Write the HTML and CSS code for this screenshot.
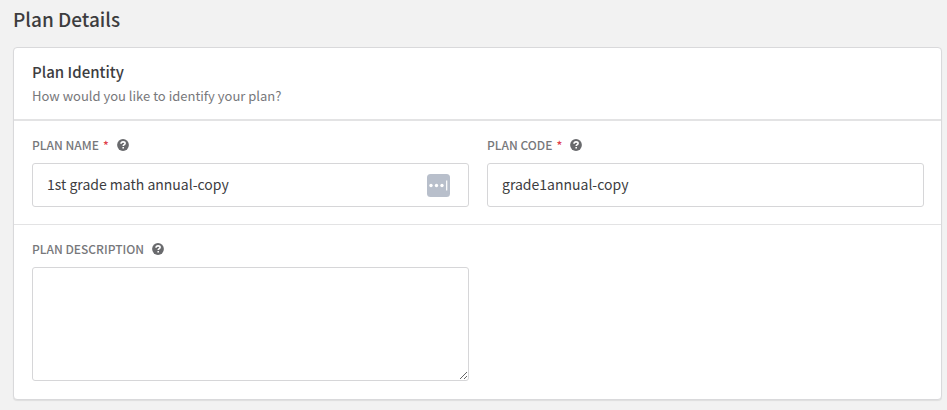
FILE: index.html
```
<!DOCTYPE html>
<html lang="en">
<head>
  <meta charset="UTF-8">
  <meta name="viewport" content="width=device-width, initial-scale=1.0">
  <title>Plan Details</title>
  <link rel="stylesheet" href="styles.css">
</head>
<body>

  <svg class="sprite" aria-hidden="true">
    <symbol id="help" viewBox="0 0 12 12">
      <circle cx="6" cy="6" r="5.9" fill="#696a6d"/>
      <path d="M4 4.7C4.1 3.4 5 2.9 6.1 2.9c1.2 0 2 .7 2 1.6C8.1 5.700 6.2 5.700 6.2 7.100" fill="none" stroke="#fff" stroke-width="1.6"/>
      <rect x="5.400" y="8" width="1.600" height="1.500" fill="#fff"/>
    </symbol>
  </svg>

  <main class="page">
    <h1 class="page-title">Plan Details</h1>

    <form class="card">
      <div class="card-header">
        <h2>Plan Identity</h2>
        <p>How would you like to identify your plan?</p>
      </div>

      <div class="card-row">
        <div class="field">
          <div class="field-label">
            <label for="plan-name">PLAN NAME<span class="required">*</span></label>
            <svg class="help"><use href="#help"/></svg>
          </div>
          <div class="input-wrap">
            <input type="text" id="plan-name" value="1st grade math annual-copy">
            <button type="button" class="autofill" aria-label="Autofill">
              <svg viewBox="0 0 24 24">
                <rect x="1" y="1" width="23" height="23" rx="3.5" fill="#b8bfcb"/>
                <circle cx="5" cy="12.5" r="1.7" fill="#fff"/>
                <circle cx="10.5" cy="12.5" r="1.7" fill="#fff"/>
                <circle cx="16" cy="12.5" r="1.7" fill="#fff"/>
                <path d="M20.700 7.500v10" stroke="#fff" stroke-width="1.2"/>
              </svg>
            </button>
          </div>
        </div>

        <div class="field">
          <div class="field-label">
            <label for="plan-code">PLAN CODE<span class="required">*</span></label>
            <svg class="help"><use href="#help"/></svg>
          </div>
          <div class="input-wrap">
            <input type="text" id="plan-code" value="grade1annual-copy">
          </div>
        </div>
      </div>

      <div class="card-row">
        <div class="field">
          <div class="field-label">
            <label for="plan-description">PLAN DESCRIPTION</label>
            <svg class="help"><use href="#help"/></svg>
          </div>
          <textarea id="plan-description"></textarea>
        </div>
      </div>
    </form>
  </main>

</body>
</html>
```
FILE: styles.css
```
* {
  box-sizing: border-box;
}

body {
  margin: 0;
  background-color: #f2f2f2;
  color: #3d3d3f;
  font-family: "Noto Sans CJK SC", "Open Sans", sans-serif;
}

h1, h2, p {
  margin: 0;
}

.sprite {
  display: none;
}

.page {
  padding: 6px 5px 10px 13px;
}

.page-title {
  margin-bottom: 15px;
  font-size: 19px;
  font-weight: 500;
  line-height: 26px;
}

.card {
  background-color: #fff;
  border: 1px solid #d9d9db;
  border-radius: 4px;
  box-shadow: 0 1px 1px rgba(0, 0, 0, 0.08);
}

.card-header {
  padding: 12px 18px 11px;
  border-bottom: 2px solid #e3e3e4;
}

.card-header h2 {
  font-size: 15px;
  font-weight: 500;
  line-height: 24px;
}

.card-header p {
  color: #77787b;
  font-size: 13px;
  line-height: 24px;
}

.card-row {
  display: grid;
  grid-template-columns: 1fr 1fr;
  gap: 18px;
  padding: 14px 17px 17px 18px;
}

.card-row + .card-row {
  border-top: 1px solid #e3e3e4;
}

.card-row:last-child {
  padding-bottom: 18px;
}

.field-label {
  display: flex;
  align-items: center;
  gap: 8px;
  height: 20px;
  margin-bottom: 8px;
  color: #77787b;
  font-size: 12px;
  font-weight: 500;
  line-height: 20px;
}

.required {
  margin-left: 4px;
  color: #e0404a;
}

.help {
  width: 12px;
  height: 12px;
}

.input-wrap {
  position: relative;
}

input,
textarea {
  display: block;
  width: 100%;
  padding: 0 14px;
  background-color: #fff;
  border: 1px solid #d6d6d8;
  border-radius: 3px;
  color: #3d3d3f;
  font-family: inherit;
  font-size: 14px;
}

input {
  height: 44px;
  padding-bottom: 2px;
}

textarea {
  height: 114px;
  padding: 10px 14px;
}

/* sits over the right end of the input */
.autofill {
  position: absolute;
  top: 10px;
  right: 19px;
  width: 24px;
  height: 24px;
  padding: 0;
  background: none;
  border: 0;
}

.autofill svg {
  display: block;
}
```
